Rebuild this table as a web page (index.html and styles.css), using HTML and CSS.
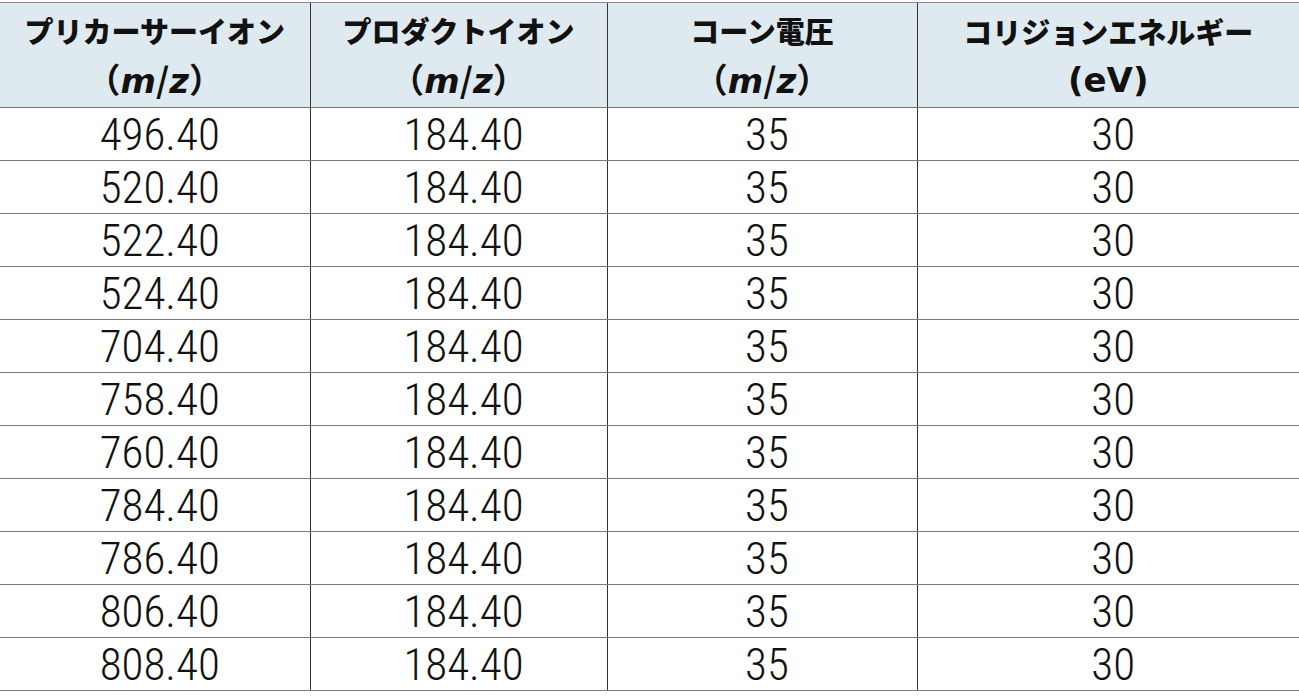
FILE: index.html
```html
<!DOCTYPE html>
<html lang="ja">
<head>
<meta charset="utf-8">
<link rel="stylesheet" href="styles.css">
</head>
<body>
<table class="tbl">
<colgroup><col class="c1"><col class="c2"><col class="c3"><col class="c4"></colgroup>
<thead>
<tr>
<th><span class="l1">プリカーサーイオン</span><span class="l2">（<i>m</i>/<i>z</i>）</span></th>
<th><span class="l1">プロダクトイオン</span><span class="l2">（<i>m</i>/<i>z</i>）</span></th>
<th><span class="l1">コーン電圧</span><span class="l2">（<i>m</i>/<i>z</i>）</span></th>
<th><span class="l1">コリジョンエネルギー</span><span class="l2 lat">(eV)</span></th>
</tr>
</thead>
<tbody>
<tr><td>496.40</td><td>184.40</td><td>35</td><td>30</td></tr>
<tr><td>520.40</td><td>184.40</td><td>35</td><td>30</td></tr>
<tr><td>522.40</td><td>184.40</td><td>35</td><td>30</td></tr>
<tr><td>524.40</td><td>184.40</td><td>35</td><td>30</td></tr>
<tr><td>704.40</td><td>184.40</td><td>35</td><td>30</td></tr>
<tr><td>758.40</td><td>184.40</td><td>35</td><td>30</td></tr>
<tr><td>760.40</td><td>184.40</td><td>35</td><td>30</td></tr>
<tr><td>784.40</td><td>184.40</td><td>35</td><td>30</td></tr>
<tr><td>786.40</td><td>184.40</td><td>35</td><td>30</td></tr>
<tr><td>806.40</td><td>184.40</td><td>35</td><td>30</td></tr>
<tr><td>808.40</td><td>184.40</td><td>35</td><td>30</td></tr>
</tbody>
</table>
</body>
</html>
```
FILE: styles.css
```css
html, body {
  margin: 0;
  padding: 0;
  background: #ffffff;
}
body {
  padding-top: 2px;
  font-family: "Noto Sans CJK JP", "Noto Sans", sans-serif;
  color: #1a1a1a;
}
.tbl {
  border-collapse: collapse;
  table-layout: fixed;
  width: 1299px;
}
.c1 { width: 310px; }
.c2 { width: 297px; }
.c3 { width: 310px; }
.c4 { width: 382px; }
.tbl th {
  background: #deeaf0;
  height: 101px;
  padding: 3px 0 0 0;
  font-weight: 900;
  font-size: 29px;
  color: #111;
  text-align: center;
  vertical-align: middle;
  border-top: 1px solid #8a8f92;
  border-bottom: 1px solid #6f7375;
  border-left: 1px solid #333;
  line-height: 1;
}
.tbl th:first-child, .tbl td:first-child { border-left: none; }
.l1, .l2 { display: block; }
.l1 { margin-bottom: 15px; }
.l2 { font-size: 34px; padding-top: 2px; font-weight: 700; }
.l2 i { font-style: italic; font-family: "DejaVu Sans", "Noto Sans", sans-serif; font-weight: 700; }
.l2.lat { font-family: "DejaVu Sans", "Noto Sans", sans-serif; font-weight: 700; }
.tbl td {
  height: 52px;
  padding: 0 0 0 10px;
  text-align: center;
  vertical-align: middle;
  font-family: "Roboto Condensed", "Liberation Sans Narrow", "DejaVu Sans Condensed", sans-serif;
  font-weight: 300;
  font-size: 45px;
  line-height: 1;
  color: #111;
  border-bottom: 1px solid #7a7a7a;
  border-left: 1px solid #333;
}
```
